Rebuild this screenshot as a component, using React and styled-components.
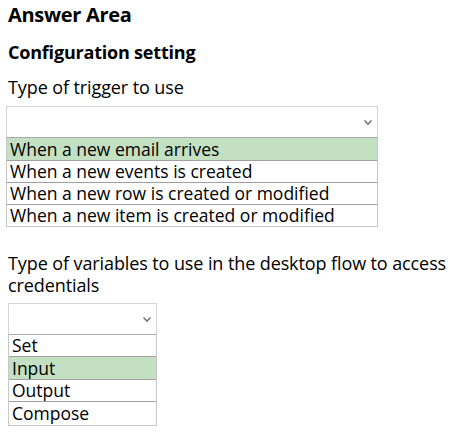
import React from "react";
import styled, { createGlobalStyle } from "styled-components";

const Global = createGlobalStyle`
  html, body { margin: 0; padding: 0; background: #fff; }
  body { font-family: "Open Sans", "Noto Sans", sans-serif; color: #000; }
`;

const Page = styled.div`
  width: 460px;
  height: 435px;
  padding: 2px 0 0 8px;
  box-sizing: border-box;
  overflow: hidden;
`;

const Title = styled.h1`
  margin: 0;
  font-size: 20px;
  font-weight: 700;
  line-height: 26px;
  letter-spacing: -0.3px;
`;

const Heading = styled.h2`
  margin: 12px 0 0;
  font-size: 18px;
  font-weight: 700;
  line-height: 24px;
  letter-spacing: -0.2px;
`;

const Label = styled.div`
  margin-top: ${(p) => p.$top}px;
  font-size: 18px;
  line-height: 22px;
  letter-spacing: -0.1px;
`;

const Field = styled.div`
  margin-top: ${(p) => p.$top}px;
  margin-left: ${(p) => p.$shift}px;
  width: ${(p) => p.$width}px;
`;

const SelectBox = styled.div`
  height: 31px;
  border: 1px solid #d4d4d4;
  border-bottom: none;
  display: flex;
  align-items: center;
  justify-content: flex-end;
  padding-right: 4px;
  box-sizing: border-box;
`;

const Options = styled.div`
  border: 1px solid #c8c8c8;
  border-top: 1px solid #a8a8a8;
  display: flex;
  flex-direction: column;
`;

const Option = styled.div`
  height: ${(p) => p.$h}px;
  line-height: ${(p) => p.$h}px;
  padding-left: 3px;
  font-size: 17.5px;
  letter-spacing: 0;
  background: ${(p) => (p.$selected ? "#c4e0c2" : "#fff")};
  border-top: ${(p) => (p.$first ? "none" : "1px solid #a0a0a0")};
  white-space: nowrap;
`;

const Chevron = () => (
  <svg width="10" height="7" viewBox="0 0 10 7">
    <path d="M1.5 1.5 L5 5 L8.5 1.5" fill="none" stroke="#777" strokeWidth="1.6" />
  </svg>
);

const Dropdown = ({ top, shift, width, options, heights }) => (
  <Field $top={top} $shift={shift} $width={width}>
    <SelectBox>
      <Chevron />
    </SelectBox>
    <Options>
      {options.map((o, i) => (
        <Option key={o.text} $first={i === 0} $selected={o.selected} $h={heights[i]}>
          {o.text}
        </Option>
      ))}
    </Options>
  </Field>
);

export default function App() {
  return (
    <Page>
      <Global />
      <Title>Answer Area</Title>
      <Heading>Configuration setting</Heading>
      <Label $top={12}>Type of trigger to use</Label>
      <Dropdown
        top={8}
        shift={-2}
        width={372}
        heights={[22, 21, 21, 21]}
        options={[
          { text: "When a new email arrives", selected: true },
          { text: "When a new events is created" },
          { text: "When a new row is created or modified" },
          { text: "When a new item is created or modified" },
        ]}
      />
      <Label $top={25}>Type of variables to use in the desktop flow to access credentials</Label>
      <Dropdown
        top={7}
        shift={0}
        width={149}
        heights={[21, 22, 21, 23]}
        options={[
          { text: "Set" },
          { text: "Input", selected: true },
          { text: "Output" },
          { text: "Compose" },
        ]}
      />
    </Page>
  );
}
